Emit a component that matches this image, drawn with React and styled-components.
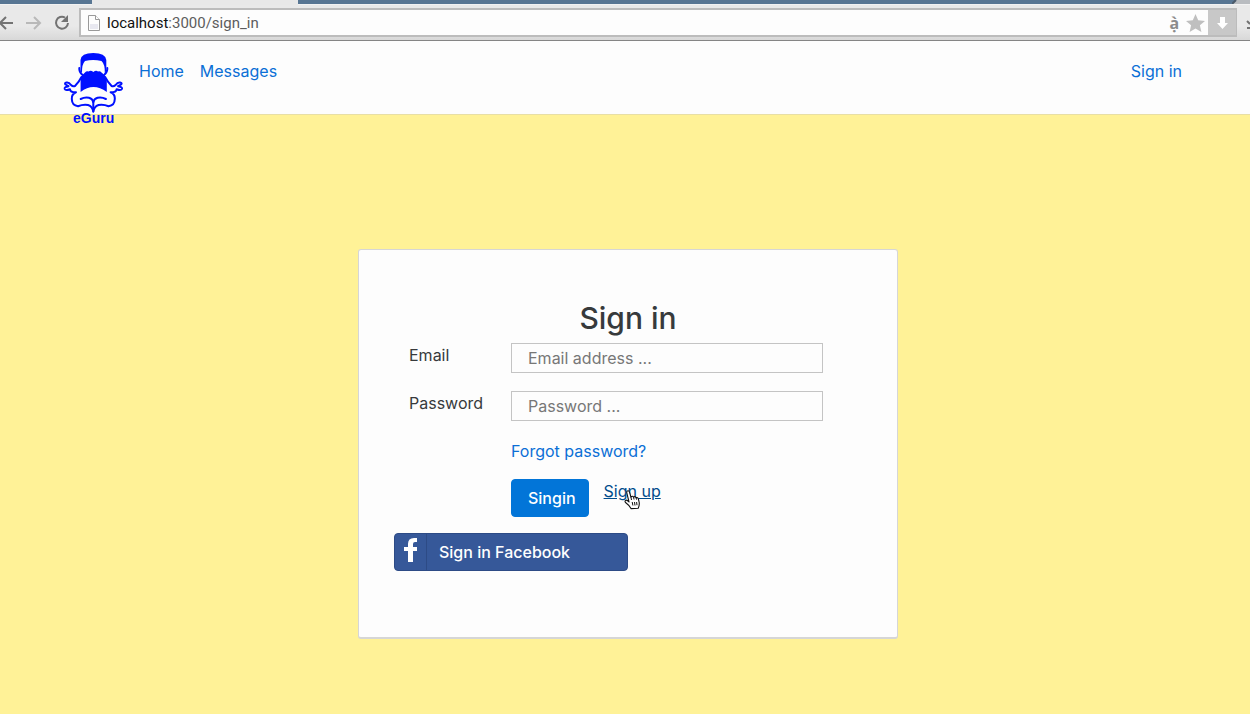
import React from "react";
import styled, { createGlobalStyle } from "styled-components";

const GlobalStyle = createGlobalStyle`
  *, *::before, *::after { box-sizing: border-box; }
  body {
    margin: 0;
    min-height: 100vh;
    background: #fff297;
    color: #373a3c;
    font: 16px/24px Inter, "Liberation Sans", sans-serif;
  }
`;

const Chrome = styled.div`
  height: 41px;
  display: flex;
  flex-direction: column;
  background: #e8e8e8;
  border-bottom: 1px solid #858585;
`;

const TabStrip = styled.div`
  height: 5px;
  flex: none;
  display: flex;
  justify-content: space-between;
  background: #587693;
  border-bottom: 1px solid #f2f2f2;
`;

const ActiveTab = styled.div`
  width: 206px;
  height: 5px;
  margin-left: 92px;
  background: #e8e8e8;
`;

const WindowCorner = styled.svg`
  display: block;
`;

const Toolbar = styled.div`
  flex: 1;
  display: flex;
  align-items: center;
  overflow: hidden;
  background: linear-gradient(#e9e9e9 60%, #d8d8d8);
`;

const ToolButton = styled.button`
  width: ${(p) => p.$width}px;
  height: 28px;
  flex: none;
  padding: 0;
  border: 0;
  background: none;
  color: ${(p) => p.$color};

  svg { display: block; }
`;

const AddressBar = styled.div`
  flex: 1;
  height: 29px;
  display: flex;
  align-items: center;
  background: #fdfdfd;
  border: 2px solid #bcbcbc;
  border-right-width: 1px;
  padding-left: 7px;
  gap: 7px;

  svg { flex: none; display: block; }
`;

const Url = styled.div`
  flex: 1;
  font-family: Roboto, "Liberation Sans", sans-serif;
  font-size: 15px;
  line-height: 20px;
  color: #5c5c5c;

  b { font-weight: 400; color: #111; }
`;

const Translate = styled.span`
  font: 700 16px/20px "Noto Sans", sans-serif;
  color: #8c8c8c;
`;

const DownloadButton = styled.button`
  width: 28px;
  height: 25px;
  margin-left: -4px;
  display: grid;
  place-items: center;
  padding: 0;
  border: 0;
  background: #c8c8c8;
`;

const Header = styled.header`
  height: 74px;
  display: flex;
  align-items: flex-start;
  padding: 8px 68px 0 63px;
  background: #fdfdfd;
  border-bottom: 1px solid #e8dfa6;
`;

const Brand = styled.a`
  margin-right: 16px;
  svg { display: block; }
`;

const Nav = styled.nav`
  flex: 1;
  display: flex;
  gap: 16px;
  padding-top: 10px;
`;

const TextLink = styled.a`
  color: ${(p) => (p.$hovered ? "#014c8c" : "#0b6fd6")};
  text-decoration: ${(p) => (p.$hovered ? "underline" : "none")};
`;

const NavLink = styled(TextLink)`
  &:last-child { margin-left: auto; }
`;

const Main = styled.main`
  display: flex;
  justify-content: center;
  padding: 134px 20px 75px 26px;
`;

const Card = styled.form`
  width: 100%;
  max-width: 540px;
  padding: 48px 35px 66px;
  background: #fdfdfd;
  border: 1px solid #d6d6d6;
  border-bottom-width: 2px;
  border-radius: 3px;
`;

const Title = styled.h1`
  margin: 0 0 5px;
  font-size: 30px;
  line-height: 40px;
  font-weight: 500;
  text-align: center;
`;

const Fields = styled.div`
  display: grid;
  grid-template-columns: 102px minmax(0, 312px);
  row-gap: 18px;
  padding-left: 15px;
`;

const TextInput = styled.input`
  width: 100%;
  height: 30px;
  padding: 0 16px;
  border: 1px solid #c4c4c4;
  background: #fdfdfd;
  font: inherit;
  color: #373a3c;

  &::placeholder { color: #777; opacity: 1; }
`;

const Actions = styled.div`
  grid-column: 2;
`;

const ButtonRow = styled.div`
  display: flex;
  align-items: flex-start;
  gap: 15px;
  margin-top: 16px;
`;

const SubmitButton = styled.button`
  height: 38px;
  padding: 0 12px 0 16px;
  border: 1px solid #0275d8;
  border-radius: 4px;
  background: #0275d8;
  color: #fff;
  font: inherit;
  font-weight: 500;
`;

const Hovered = styled.div`
  position: relative;
`;

const Pointer = styled.svg`
  position: absolute;
  left: 20px;
  top: 11px;
`;

const FacebookButton = styled.button`
  width: 234px;
  height: 38px;
  display: flex;
  align-items: center;
  margin-top: 16px;
  padding: 0;
  border: 1px solid #2d4b86;
  border-radius: 4px;
  background: #365899;
  color: #fff;
  font: inherit;
  font-weight: 500;
`;

const FacebookMark = styled.span`
  width: 32px;
  height: 36px;
  display: flex;
  justify-content: center;
  align-items: flex-start;
  padding-top: 4px;
  margin-right: 12px;
  border-right: 1px solid #2d4b86;
`;

const LogoText = styled.text`
  font: 700 14px "Liberation Sans", Arial, sans-serif;
  fill: #0010ff;
`;

function LogoSide() {
  return (
    <g>
      <path d="M16.3 19Q16 23 19.5 26" />
      <path d="M18.5 28Q16 33 12 37Q10 38 8 36Q6 33 3.5 33.5Q1.2 34 2.5 35.5L5.5 37.2Q1 38 1.7 40Q2.5 42 7 40.3Q7.5 43.5 13 43.3Q8.5 45 8.8 50Q9 56.5 15 57.2Q20 55.2 25 56Q29.5 57.5 30.3 62.5" />
      <path d="M17.7 50Q22 47.8 26 48.8Q29.5 49.8 30.3 53" />
    </g>
  );
}

function Logo() {
  return (
    <svg width="60" height="76" viewBox="0 0 60 76" role="img" aria-label="eGuru">
      <path d="M17.5 22V11Q18 4 30.3 4Q42.5 4 43.3 11V22L41.8 24Q42 15 38.5 12Q30 10 22 12Q18.8 15 19 24Z" fill="#0010ff" />
      <path d="M22 23.5Q23.5 21.7 25.5 22.5Q28 21 30.3 23Q33 21 35 22.5Q37 21.7 38.5 23.5Q43.8 27 43.8 33V43Q37 38 30.5 38Q24 38 17.6 43V33Q17.3 27 22 23.5Z" fill="#0010ff" />
      <g fill="none" stroke="#0010ff" strokeWidth="2" strokeLinecap="round" strokeLinejoin="round">
        <LogoSide />
        <g transform="matrix(-1 0 0 1 60.6 0)"><LogoSide /></g>
        <path d="M30.3 53V61" />
      </g>
      <LogoText x="10" y="74">eGuru</LogoText>
    </svg>
  );
}

export default function App() {
  return (
    <>
      <GlobalStyle />
      <Chrome>
        <TabStrip>
          <ActiveTab />
          <WindowCorner width="18" height="4" viewBox="0 0 18 4">
            <path d="M4 0H18V4H0Z" fill="#b9bcc0" />
            <path d="M4 0L0 4" stroke="#4b5a69" strokeWidth="2" />
          </WindowCorner>
        </TabStrip>
        <Toolbar>
          <ToolButton type="button" aria-label="Back" $width={20} $color="#737373">
            <svg width="20" height="28" viewBox="0 0 20 28" fill="none" stroke="currentColor" strokeWidth="2">
              <path d="M13 14H1M6 8L0 14L6 20" />
            </svg>
          </ToolButton>
          <ToolButton type="button" aria-label="Forward" $width={29} $color="#b9b9b9">
            <svg width="29" height="28" viewBox="0 0 29 28" fill="none" stroke="currentColor" strokeWidth="2">
              <path d="M6 14H19M14 8L20 14L14 20" />
            </svg>
          </ToolButton>
          <ToolButton type="button" aria-label="Reload" $width={30} $color="#737373">
            <svg width="30" height="28" viewBox="0 0 30 28" fill="none" stroke="currentColor" strokeWidth="2">
              <path d="M16 8.5A6 6 0 1 0 19 14" />
              <path d="M19 6V13H12Z" fill="currentColor" stroke="none" />
            </svg>
          </ToolButton>
          <AddressBar>
            <svg width="12" height="16" viewBox="0 0 12 16" fill="#fdfdfd" stroke="#999">
              <path d="M.5 .5H7.5L11.5 4.5V15.5H.5Z" />
              <path d="M7.5 .5V4.5H11.5" />
              <path d="M2 9H10V14H2Z" fill="#e8e8f0" stroke="none" />
            </svg>
            <Url><b>localhost</b>:3000/sign_in</Url>
            <Translate>ạ̀</Translate>
            <svg width="19" height="18" viewBox="0 0 19 18">
              <path d="M9.5 0L12.2 6.2L19 6.9L13.9 11.3L15.4 18L9.5 14.5L3.6 18L5.1 11.3L0 6.9L6.8 6.2Z" fill="#bfbfbf" />
            </svg>
            <DownloadButton type="button" aria-label="Save page">
              <svg width="11" height="12" viewBox="0 0 11 12">
                <path d="M3 0H8V6H11L5.5 12L0 6H3Z" fill="#fff" />
              </svg>
            </DownloadButton>
          </AddressBar>
          <ToolButton type="button" aria-label="Downloads" $width={13} $color="#737373">
            <svg width="13" height="28" viewBox="0 0 13 28" fill="none" stroke="currentColor" strokeWidth="2">
              <path d="M10 12L13 15M10 19H13" />
            </svg>
          </ToolButton>
        </Toolbar>
      </Chrome>
      <Header>
        <Brand href="#"><Logo /></Brand>
        <Nav>
          <NavLink href="#">Home</NavLink>
          <NavLink href="#">Messages</NavLink>
          <NavLink href="#">Sign in</NavLink>
        </Nav>
      </Header>
      <Main>
        <Card>
          <Title>Sign in</Title>
          <Fields>
            <label htmlFor="email">Email</label>
            <TextInput id="email" type="email" placeholder="Email address ..." />
            <label htmlFor="password">Password</label>
            <TextInput id="password" type="password" placeholder="Password ..." />
            <Actions>
              <TextLink href="#">Forgot password?</TextLink>
              <ButtonRow>
                <SubmitButton type="button">Singin</SubmitButton>
                <Hovered>
                  <TextLink $hovered href="#">Sign up</TextLink>
                  <Pointer width="17" height="20" viewBox="0 0 17 20" aria-hidden="true">
                    <path
                      d="M5 12L2.8 2.8Q2.4 1 3.8 .8Q5 .6 5.5 2.2L6.9 7Q8.6 5.4 9.6 7.2Q11.2 5.8 12.1 7.7Q13.9 7 14.4 9L15.2 12.5Q15.6 15 14.2 18.2L7 18.6Q5.5 15.5 1.8 12.8Q.2 11 1.8 10.2Q3.2 9.8 5 12Z"
                      fill="#fff"
                      stroke="#111"
                      strokeWidth="1.1"
                      strokeLinejoin="round"
                    />
                    <path d="M8.2 12L8.9 15.5M10.5 12L11 15.5M12.6 12L13 15.2M6.9 7L7.5 10M9.6 7.2L10 9.5M12.1 7.7L12.5 9.6" stroke="#111" />
                  </Pointer>
                </Hovered>
              </ButtonRow>
            </Actions>
          </Fields>
          <FacebookButton type="button">
            <FacebookMark>
              <svg width="14" height="24" viewBox="0 0 14 24" aria-hidden="true">
                <path d="M13 0H10Q4 0 4 6V9H0V13H4V24H9V13H13V9H9V6Q9 4 11 4H13Z" fill="#fff" />
              </svg>
            </FacebookMark>
            Sign in Facebook
          </FacebookButton>
        </Card>
      </Main>
    </>
  );
}
